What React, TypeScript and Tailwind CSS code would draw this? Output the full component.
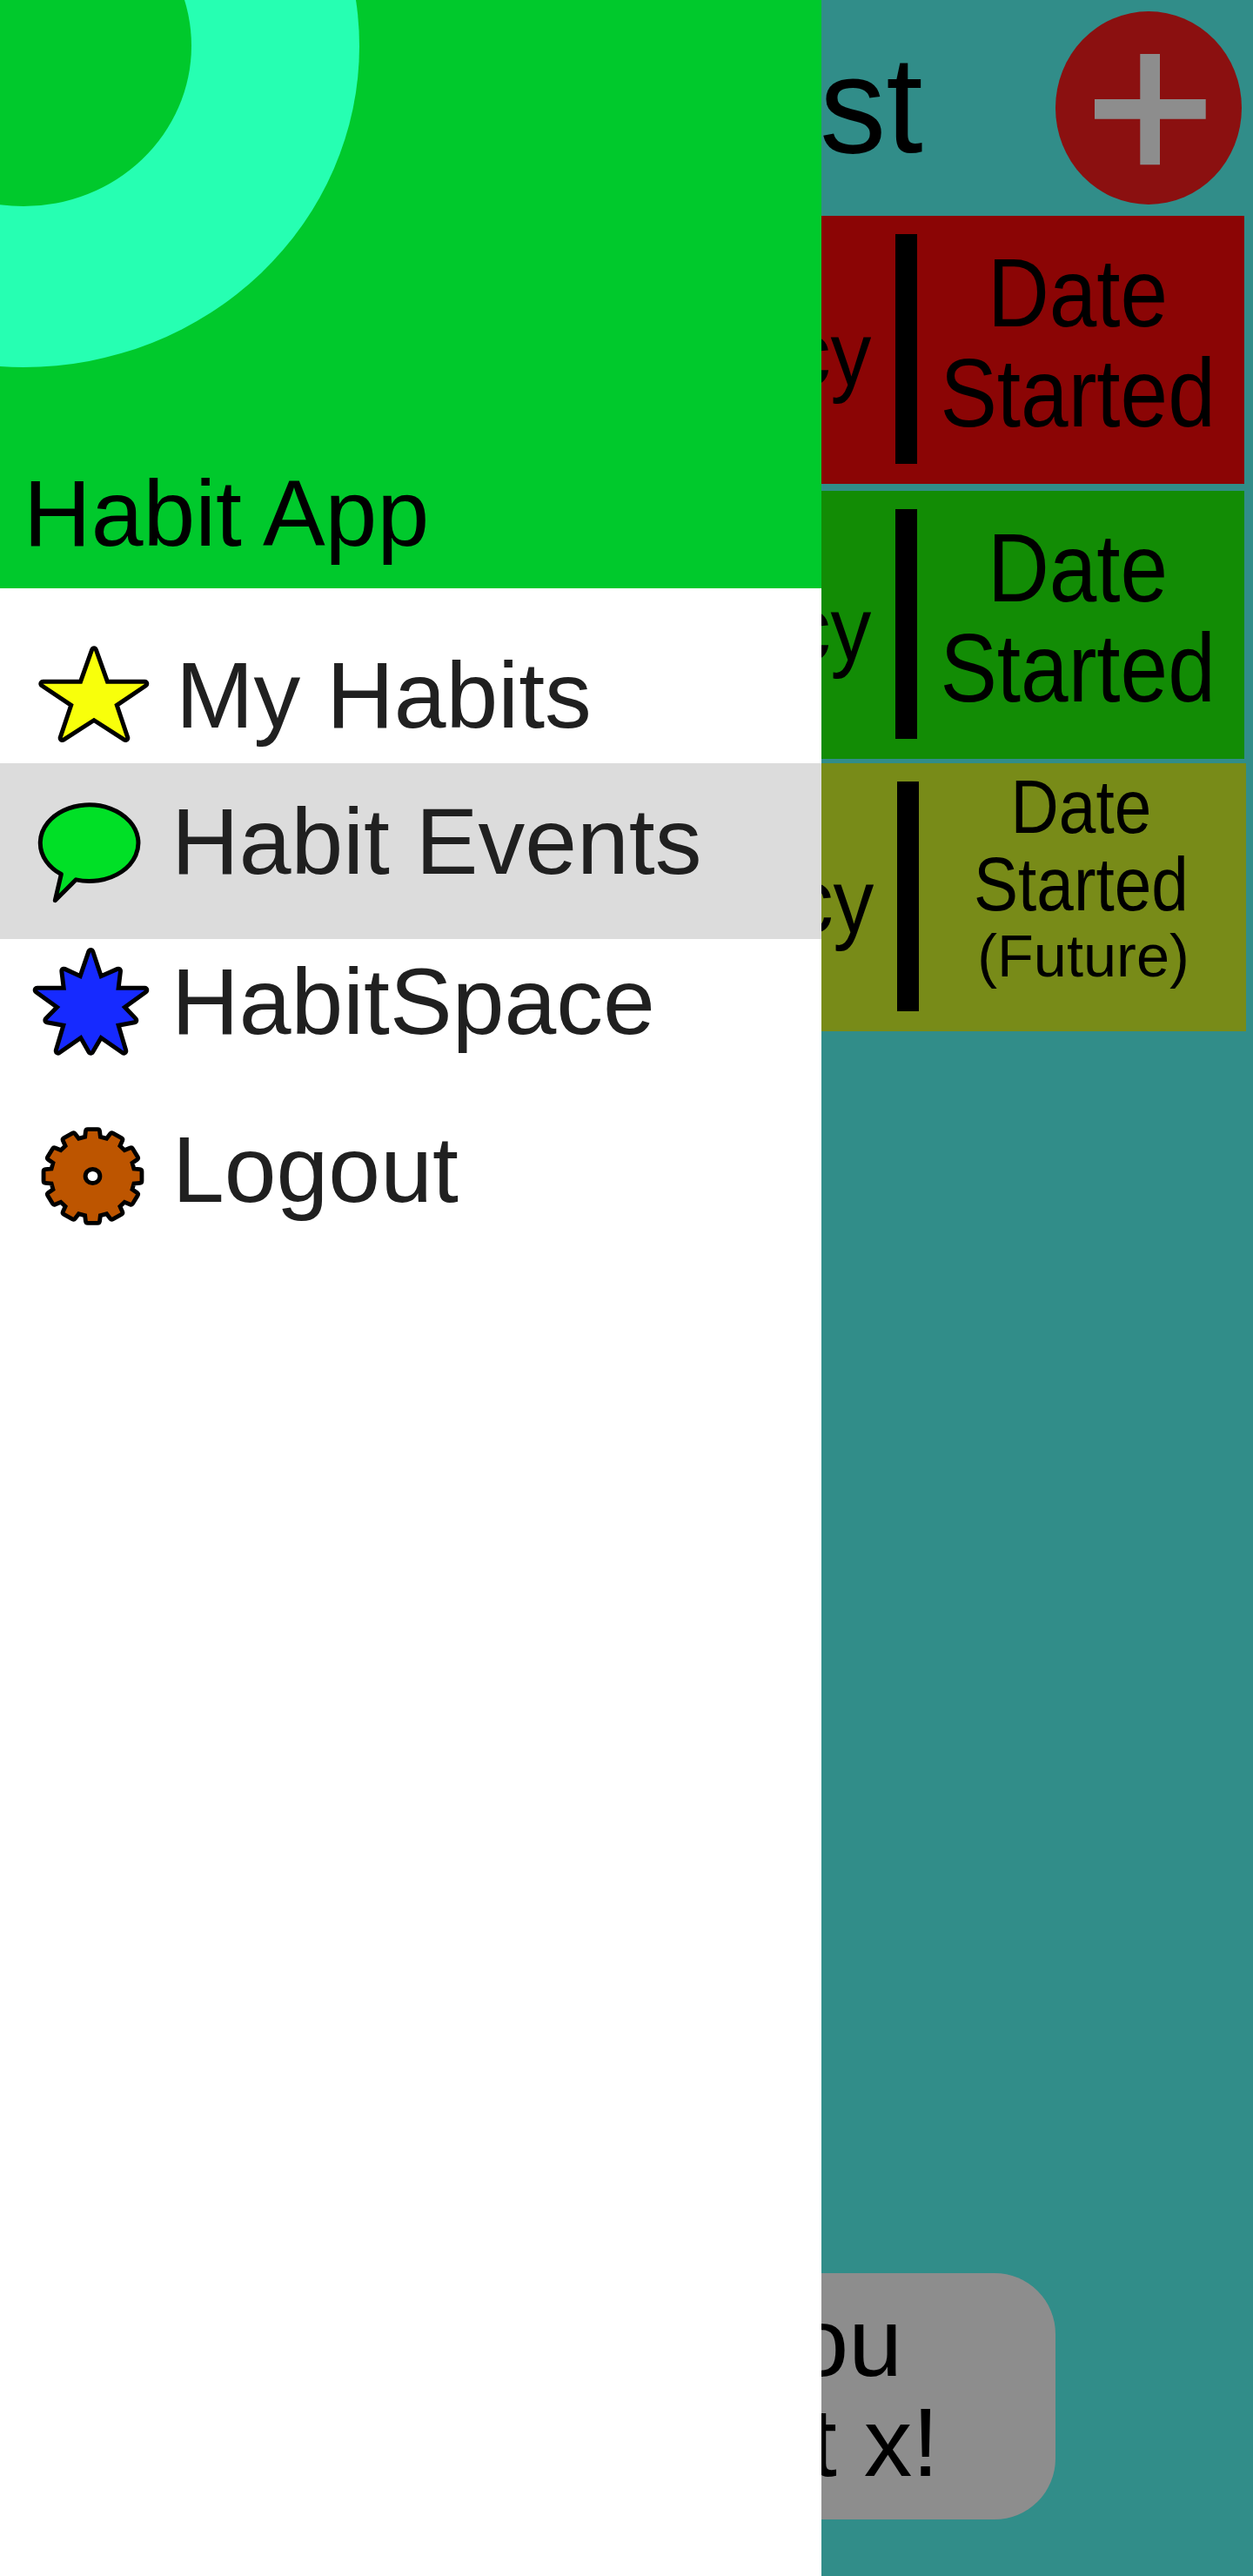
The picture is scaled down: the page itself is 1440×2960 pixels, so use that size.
import type { ReactNode } from 'react';

const CENTER = { x: 319.5, y: 874.5 };

// Twelve-toothed cog outline, slightly wider than tall.
function cogPoints(): string {
  const points: string[] = [];
  const add = (deg: number, rx: number, ry: number) => {
    const a = (deg * Math.PI) / 180;
    points.push(`${(CENTER.x + rx * Math.sin(a)).toFixed(1)},${(CENTER.y - ry * Math.cos(a)).toFixed(1)}`);
  };
  for (let i = 0; i < 12; i++) {
    const mid = i * 30;
    add(mid - 8.3, 138, 131);
    add(mid - 6, 163, 155);
    add(mid + 6, 163, 155);
    add(mid + 8.3, 138, 131);
  }
  return points.join(' ');
}

function StarIcon() {
  return (
    <svg className="mt-[65px] ml-[42px] h-[114px] w-[132px] shrink-0" viewBox="126 123 396 342">
      <polygon
        points="324,142 365,257 499,257 394,328 433,444 324,374 215,444 254,328 148,257 283,257"
        fill="#f8ff0b"
        stroke="#000"
        strokeWidth="30"
        strokeLinejoin="round"
        paintOrder="stroke"
      />
    </svg>
  );
}

function SpeechIcon() {
  return (
    <svg className="mt-[43px] ml-[41px] h-[120px] w-[123px] shrink-0" viewBox="123 660 369 360">
      <path
        d="M211 913.7 L190 1004 L262 932.5 A169 131.5 0 1 0 211 913.7 Z"
        fill="#00e026"
        stroke="#000"
        strokeWidth="15"
        strokeLinejoin="round"
      />
    </svg>
  );
}

function BurstIcon() {
  return (
    <svg className="mt-[7px] ml-[34px] h-[130px] w-[141px] shrink-0" viewBox="102 78 423 390">
      <polygon
        points="313,102 344,195 408,167 400,233 499,233 419,291 463,337 399,349 427,443 346,387 313,443 281,387 200,443 228,349 163,337 208,291 128,233 228,233 220,167 281,195"
        fill="#162aff"
        stroke="#000"
        strokeWidth="30"
        strokeLinejoin="round"
        paintOrder="stroke"
      />
    </svg>
  );
}

function CogIcon() {
  return (
    <svg className="mt-[20px] ml-[44px] h-[119px] w-[125px] shrink-0" viewBox="132 696 375 357">
      <polygon
        points={cogPoints()}
        fill="#bd5500"
        stroke="#000"
        strokeWidth="29"
        strokeLinejoin="round"
        paintOrder="stroke"
      />
      <ellipse cx="319.5" cy="874.5" rx="32.5" ry="31.5" fill="#000" />
      <ellipse cx="319.5" cy="874.5" rx="17.5" ry="16.5" fill="#fff" />
    </svg>
  );
}

function MenuItem({ icon, label, row, text }: { icon: ReactNode; label: string; row: string; text: string }) {
  return (
    <li className={`flex items-start ${row}`}>
      {icon}
      <span className={`text-[107.5px] leading-[120px] whitespace-nowrap text-[#202020] ${text}`}>{label}</span>
    </li>
  );
}

function Drawer() {
  return (
    <aside className="absolute top-0 left-0 flex h-[2960px] w-[944px] flex-col bg-white">
      <header className="relative flex h-[676px] items-end overflow-hidden bg-[#00c92c]">
        <svg className="absolute top-0 left-0 h-[440px] w-[440px]" viewBox="0 0 440 440">
          <ellipse cx="27" cy="53" rx="386" ry="369" fill="#26ffb2" />
          <ellipse cx="27" cy="52.5" rx="193" ry="184.5" fill="#00c92c" />
        </svg>
        <h2 className="relative mb-[26px] ml-[27px] text-[107.5px] leading-[120px] whitespace-nowrap">Habit App</h2>
      </header>
      <ul className="flex flex-col">
        <MenuItem icon={<StarIcon />} label="My Habits" row="h-[201px]" text="mt-[63px] ml-[28px]" />
        <MenuItem icon={<SpeechIcon />} label="Habit Events" row="h-[202px] bg-[#dcdcdc]" text="mt-[30px] ml-[33px]" />
        <MenuItem icon={<BurstIcon />} label="HabitSpace" row="h-[193px]" text="mt-[12px] ml-[22px]" />
        <MenuItem icon={<CogIcon />} label="Logout" row="h-[193px]" text="mt-[12px] ml-[29px]" />
      </ul>
    </aside>
  );
}

function HabitCard({ className, children }: { className: string; children: ReactNode }) {
  return (
    <article className={`flex h-[308px] items-start ${className}`}>
      <div className="flex flex-1 justify-end pt-[106px] pr-[27px]">
        <span className="origin-right scale-x-[0.9] text-[104px] leading-[104px]">Frequency</span>
      </div>
      <div className="mt-[21px] h-[264px] w-[25px] bg-black" />
      <div className="flex w-[376px] flex-col items-center whitespace-nowrap">{children}</div>
    </article>
  );
}

function StartedDate() {
  return (
    <div className="mr-[6px] flex scale-x-[0.876] flex-col items-center pt-[31px] text-[112px] leading-[115px]">
      <span>Date</span>
      <span>Started</span>
    </div>
  );
}

export default function App() {
  return (
    <div className="relative h-[2960px] w-[1440px] overflow-hidden bg-[#318d89] font-['Liberation_Sans',Arial,sans-serif] text-black">
      <main className="flex h-full flex-col">
        <header className="flex h-[248px] items-start">
          <h1 className="flex flex-1 justify-end pt-[30px] pr-[152px] text-[158px] leading-[180px] whitespace-nowrap">
            <span className="origin-right scale-x-[0.965]">Habit List</span>
          </h1>
          <button className="mt-[13px] mr-[13px] h-[222px] w-[214px] rounded-[50%] bg-[#8b1010]" aria-label="Add habit">
            <svg className="h-[222px] w-[214px]" viewBox="0 0 214 222">
              <path d="M97.3 49h22.7v52h52.7v22.7h-52.7v52.6h-22.7v-52.6h-52.3v-22.7h52.3z" fill="#8d8d8d" />
            </svg>
          </button>
        </header>
        <section className="flex flex-col">
          <HabitCard className="mb-2 ml-[10px] w-[1419.5px] bg-[#8b0505]">
            <StartedDate />
          </HabitCard>
          <HabitCard className="mb-[5px] ml-[10px] w-[1419.5px] bg-[#128c05]">
            <StartedDate />
          </HabitCard>
          <HabitCard className="ml-[12px] w-[1420px] bg-[#788b18]">
            <div className="mr-[3px] flex scale-x-[0.885] flex-col items-center pt-[6px] text-[86.5px] leading-[89px]">
              <span>Date</span>
              <span>Started</span>
            </div>
            <span className="ml-[2px] text-[68.5px] leading-[76px]">(Future)</span>
          </HabitCard>
        </section>
        <div className="mt-auto mb-[65px] ml-[227px] flex h-[283px] w-[986px] flex-col items-end rounded-[70px] bg-[#8d8d8d] pt-[23px] text-[111px] leading-[115px] whitespace-nowrap">
          <span className="mr-[176px]">Great, you</span>
          <span className="mr-[134px]">did habit x!</span>
        </div>
      </main>
      <Drawer />
    </div>
  );
}
